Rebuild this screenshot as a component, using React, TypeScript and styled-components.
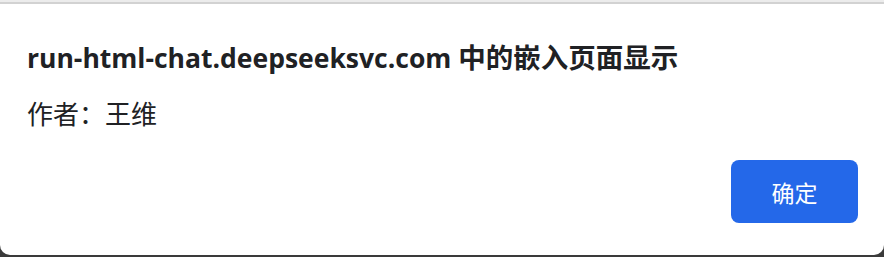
import React from "react";
import styled, { createGlobalStyle } from "styled-components";

const Global = createGlobalStyle`
  html, body { margin: 0; padding: 0; background: #ffffff; }
  body { font-family: "Open Sans", "Noto Sans CJK SC", sans-serif; }
`;

const Backdrop = styled.div`
  width: 884px;
  height: 257px;
  background: #3a3a3a;
  display: flex;
  flex-direction: column;
`;

const Dialog = styled.div`
  height: 255px;
  box-sizing: border-box;
  background: #ffffff;
  border-top: 2px solid #ececec;
  border-radius: 0 0 10px 10px;
  display: flex;
  flex-direction: column;
  &::before {
    content: "";
    display: block;
    height: 2px;
    background: #d2d2d2;
  }
`;

const Content = styled.div`
  flex: 1;
  display: flex;
  flex-direction: column;
  padding: 34px 26px 0 27px;
`;

const Title = styled.h1`
  margin: 0;
  font-family: "Open Sans", "Noto Sans CJK SC", sans-serif;
  font-weight: 700;
  font-size: 26.5px;
  line-height: 36px;
  color: #202124;
  white-space: nowrap;
`;

const Cjk = styled.span`
  font-family: "Noto Sans CJK SC", sans-serif;
  font-size: 27.5px;
`;

const Message = styled.p`
  margin: 20px 0 0 0;
  font-family: "Noto Sans CJK SC", sans-serif;
  font-weight: 400;
  font-size: 26px;
  line-height: 34px;
  color: #202124;
`;

const Footer = styled.div`
  display: flex;
  justify-content: flex-end;
  margin-top: auto;
  padding-bottom: 32px;
`;

const OkButton = styled.button`
  width: 127px;
  height: 63px;
  border: none;
  border-radius: 8px;
  background: #2468e9;
  color: #ffffff;
  font-family: "Noto Sans CJK SC", sans-serif;
  font-size: 23px;
  cursor: pointer;
`;

export default function App() {
  return (
    <>
      <Global />
      <Backdrop>
        <Dialog>
          <Content>
            <Title>
              run-html-chat.deepseeksvc.com <Cjk>中的嵌入页面显示</Cjk>
            </Title>
            <Message>作者：王维</Message>
            <Footer>
              <OkButton>确定</OkButton>
            </Footer>
          </Content>
        </Dialog>
      </Backdrop>
    </>
  );
}
